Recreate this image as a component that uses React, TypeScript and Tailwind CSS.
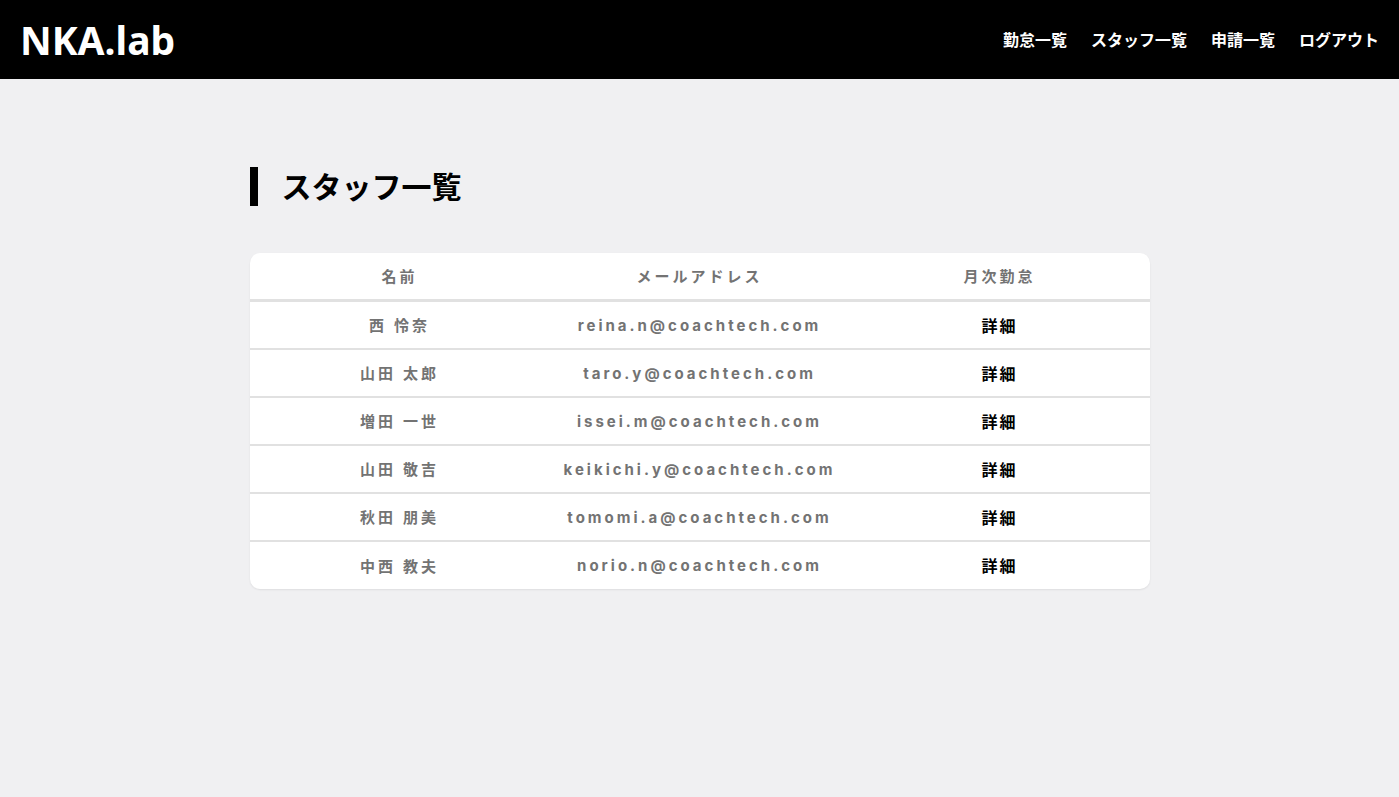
const staff = [
  { name: "西 怜奈", email: "reina.n@coachtech.com" },
  { name: "山田 太郎", email: "taro.y@coachtech.com" },
  { name: "増田 一世", email: "issei.m@coachtech.com" },
  { name: "山田 敬吉", email: "keikichi.y@coachtech.com" },
  { name: "秋田 朋美", email: "tomomi.a@coachtech.com" },
  { name: "中西 教夫", email: "norio.n@coachtech.com" },
];

const jp = "font-['Noto_Sans','Noto_Sans_CJK_JP',sans-serif]";

export default function App() {
  return (
    <div className={`min-h-[797px] bg-[#f0f0f2] ${jp}`}>
      <header className="flex h-[79px] items-center justify-between bg-black pl-5 pr-5">
        <h1 className="text-[39px] font-bold leading-none text-white">NKA.lab</h1>
        <nav className="flex items-center gap-6 text-base font-bold text-white">
          <a>勤怠一覧</a>
          <a>スタッフ一覧</a>
          <a>申請一覧</a>
          <a>ログアウト</a>
        </nav>
      </header>

      <main className="mx-auto w-[900px] pt-[88px]">
        <div className="flex items-center gap-6">
          <span className="h-[39px] w-2 bg-black" />
          <h2 className="text-[30px] font-bold leading-none text-black">スタッフ一覧</h2>
        </div>

        <div className="mt-[47px] overflow-hidden rounded-[10px] bg-white shadow-[0_1px_2px_rgba(0,0,0,0.08)]">
          <table className="w-full table-fixed border-separate border-spacing-0">
            <thead>
              <tr>
                {["名前", "メールアドレス", "月次勤怠"].map((h) => (
                  <th
                    key={h}
                    className="h-[49px] border-b-[3px] border-[#e1e1e1] p-0 pt-[1px] text-[15px] font-bold tracking-[3px] text-[#737373]"
                  >
                    {h}
                  </th>
                ))}
              </tr>
            </thead>
            <tbody>
              {staff.map((s, i) => {
                const line = i < staff.length - 1 ? "h-[48px] border-b-2 border-[#e1e1e1]" : "h-[47px]";
                return (
                  <tr key={s.email}>
                    <td className={`${line} p-0 pt-[1px] text-center text-[15px] font-bold tracking-[3px] text-[#737373]`}>
                      {s.name}
                    </td>
                    <td
                      className={`${line} p-0 pt-[2px] text-center font-['Inter',sans-serif] text-[15px] font-bold tracking-[3px] text-[#737373]`}
                    >
                      {s.email}
                    </td>
                    <td className={`${line} p-0 pt-[1px] text-center text-base font-bold tracking-[2px] text-black`}>詳細</td>
                  </tr>
                );
              })}
            </tbody>
          </table>
        </div>
      </main>
    </div>
  );
}
